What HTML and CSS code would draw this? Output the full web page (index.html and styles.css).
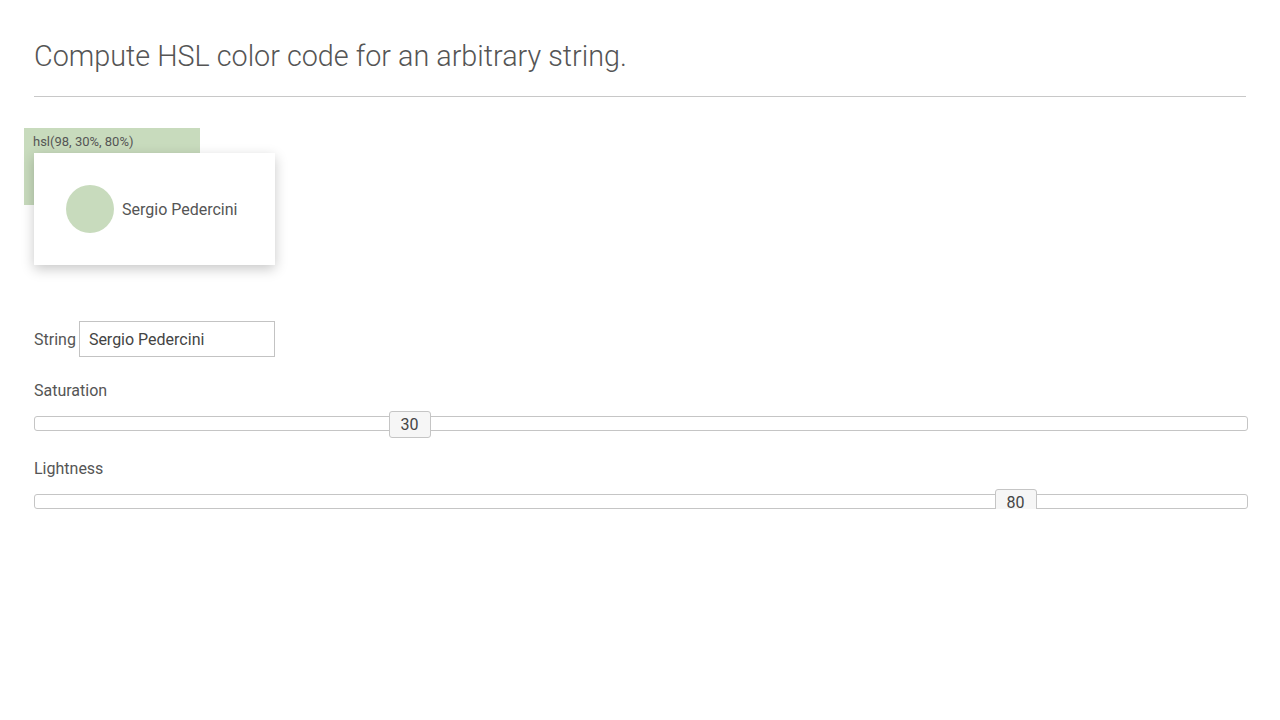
FILE: index.html
```html
<!DOCTYPE html>
<html>
<head>
<meta charset="utf-8" />
<title>String to HSL</title>
<link rel="stylesheet" href="styles.css">
</head>
<body>
<div class="page">
	<h1 class="title">Compute HSL color code for an arbitrary string.</h1>
	<hr class="rule" />

	<div class="preview">
		<div class="swatch">hsl(98, 30%, 80%)</div>
		<div class="card">
			<span class="avatar"></span>
			<span class="name">Sergio Pedercini</span>
		</div>
	</div>

	<div class="form">
		<div class="row">
			<label class="label" for="str">String</label>
			<input class="text" id="str" type="text" value="Sergio Pedercini" />
		</div>
		<div class="field">
			<div class="label">Saturation</div>
			<div class="track">
				<span class="handle" style="left:calc(30% - 10px)">30</span>
			</div>
		</div>
		<div class="field field-next">
			<div class="label">Lightness</div>
			<div class="track">
				<span class="handle" style="left:calc(80% - 10px)">80</span>
			</div>
		</div>
	</div>
</div>
</body>
</html>
```

FILE: styles.css
```css
*{ margin:0; padding:0; box-sizing:border-box;}
body{ font-family:Roboto, "Liberation Sans", sans-serif; color:#555; background:#fff;}
.page{ padding:35px 32px 0 34px;}

.title{ font-size:28.75px; font-weight:300; line-height:42px; color:#555;}
.rule{ border:0; border-top:1px solid #c8c8c8; margin-top:19px; width:1212px;}

.preview{ margin-top:31px;}
.swatch{ width:176px; height:77px; margin-left:-10px; padding:6px 9px 0; font-size:13px; line-height:15px; color:#555; background:hsl(98, 30%, 80%);}
.card{ display:inline-flex; align-items:center; gap:8px; width:241px; height:112px; margin-top:-52px; padding:0 32px; background:#fff; box-shadow:0 4px 12px rgba(0,0,0,0.22); position:relative;}
.avatar{ width:48px; height:48px; border-radius:50%; background:hsl(98, 30%, 80%); flex:none;}
.name{ font-size:16px; color:#555; white-space:nowrap;}

.form{ margin-top:56px;}
.row{ display:flex; align-items:center; gap:3px;}
.label{ font-size:16px; color:#555;}
.text{ width:196px; height:36px; padding:0 9px; border:1px solid #c3c3c3; font:16px Roboto, "Liberation Sans", sans-serif; color:#444; outline:none;}

.field{ margin-top:22px;}
.field-next{ margin-top:26px;}
.field .label{ line-height:24px;}
.track{ position:relative; width:1214px; height:15px; margin-top:13px; border:1px solid #c5c5c5; border-radius:3px; background:#fff;}
.handle{ position:absolute; top:-6px; width:42px; height:27px; line-height:25px; text-align:center; font-size:16px; color:#454545; background:#f6f6f6; border:1px solid #c5c5c5; border-radius:3px;}
```
